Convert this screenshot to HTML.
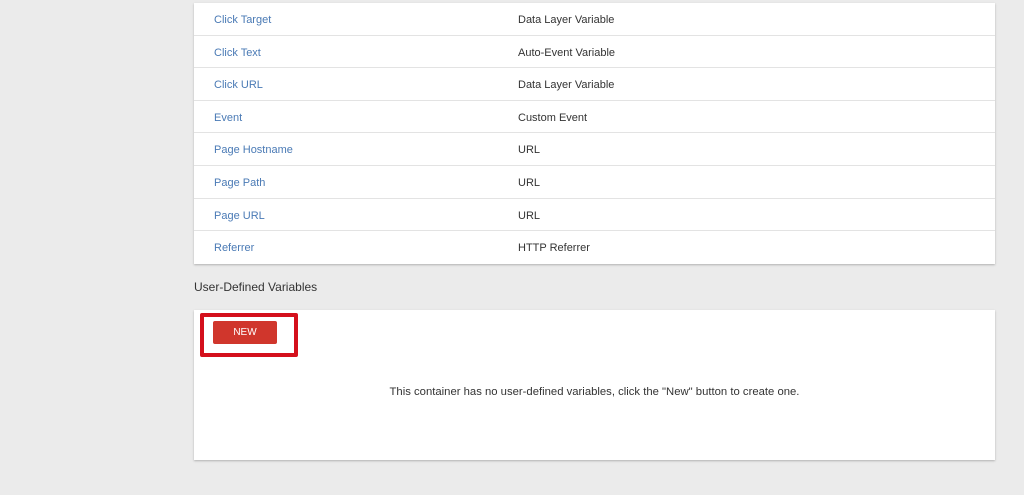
<!DOCTYPE html>
<html><head><style>
body{margin:0;width:1024px;height:495px;background:#ebebeb;font-family:"Liberation Sans",sans-serif;position:relative;overflow:hidden}
.card{position:absolute;left:194px;width:801px;background:#fff;box-shadow:0 1px 2px rgba(0,0,0,.25)}
.row{height:32.6px;border-bottom:1px solid #e3e3e3;box-sizing:border-box;position:relative;font-size:11px}
.row:last-child{border-bottom:none}
.n{position:absolute;left:20px;top:11px;color:#4a7ab5}
.t{position:absolute;left:324px;top:11px;color:#333}
</style></head><body>
<div class="card" style="top:3px;height:261px">
<div class="row"><span class="n">Click Target</span><span class="t">Data Layer Variable</span></div>
<div class="row"><span class="n">Click Text</span><span class="t">Auto-Event Variable</span></div>
<div class="row"><span class="n">Click URL</span><span class="t">Data Layer Variable</span></div>
<div class="row"><span class="n">Event</span><span class="t">Custom Event</span></div>
<div class="row"><span class="n">Page Hostname</span><span class="t">URL</span></div>
<div class="row"><span class="n">Page Path</span><span class="t">URL</span></div>
<div class="row"><span class="n">Page URL</span><span class="t">URL</span></div>
<div class="row"><span class="n">Referrer</span><span class="t">HTTP Referrer</span></div>
</div>
<div style="position:absolute;left:194px;top:280px;font-size:12px;color:#333">User-Defined Variables</div>
<div class="card" style="top:310px;height:150px">
<div style="position:absolute;left:6px;top:3px;width:90px;height:36px;border:4px solid #d4101c;border-radius:2px"></div>
<div style="position:absolute;left:19px;top:11px;width:64px;height:23px;background:#d0362c;border-radius:2px;color:#fff;font-size:10px;text-align:center;line-height:23px">NEW</div>
<div style="position:absolute;left:0;width:801px;top:76px;text-align:center;font-size:11.3px;color:#333">This container has no user-defined variables, click the "New" button to create one.</div>
</div>
</body></html>
